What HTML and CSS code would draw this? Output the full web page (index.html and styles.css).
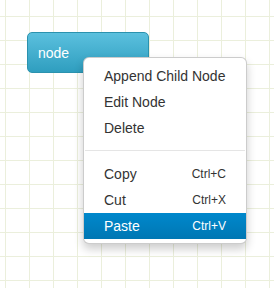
FILE: index.html
```html
<!DOCTYPE html>
<html lang="en">
<head>
    <meta charset="UTF-8">
    <meta name="viewport" content="width=device-width, initial-scale=1.0">
    <title>mind map</title>
    <link rel="stylesheet" href="styles.css">
</head>
<body>
    <div class="canvas">
        <div class="node">node</div>

        <ul class="menu">
            <li class="item">Append Child Node</li>
            <li class="item">Edit Node</li>
            <li class="item">Delete</li>
            <li class="divider"></li>
            <li class="item">Copy <span class="key">Ctrl+C</span></li>
            <li class="item">Cut <span class="key">Ctrl+X</span></li>
            <li class="item active">Paste <span class="key">Ctrl+V</span></li>
        </ul>
    </div>
</body>
</html>
```

FILE: styles.css
```css
body {
    margin: 0;
    font-family: "Liberation Sans", Arial, sans-serif;
    font-size: 14px;
    color: #333;
}
.canvas {
    position: relative;
    width: 274px;
    height: 288px;
    overflow: hidden;
    background-color: #fff;
    background-image:
        linear-gradient(to right, #ebefdc 1px, transparent 1px),
        linear-gradient(to bottom, #ebefdc 1px, transparent 1px);
    background-size: 24px 24px;
    background-position: 5px 16px;
}
.node {
    position: absolute;
    left: 27px;
    top: 32px;
    width: 122px;
    height: 41px;
    box-sizing: border-box;
    line-height: 40px;
    padding-left: 10px;
    color: #fff;
    border: 1px solid #2b92ae;
    border-radius: 5px;
    background: linear-gradient(#5bc0de, #2f9ebf);
}
.menu {
    position: absolute;
    left: 83px;
    top: 57px;
    width: 164px;
    box-sizing: border-box;
    margin: 0;
    padding: 5px 0 4px;
    list-style: none;
    background: #fff;
    border: 1px solid rgba(0, 0, 0, 0.2);
    border-radius: 6px;
    box-shadow: 0 5px 10px rgba(0, 0, 0, 0.2);
}
.item {
    display: flex;
    justify-content: space-between;
    align-items: center;
    height: 26px;
    padding: 0 20px;
}
.key {
    font-size: 12px;
}
.divider {
    height: 1px;
    margin: 9px 1px 10px;
    background: #e5e5e5;
}
.item.active {
    color: #fff;
    background: linear-gradient(#0088cc, #0077b3);
}
```
